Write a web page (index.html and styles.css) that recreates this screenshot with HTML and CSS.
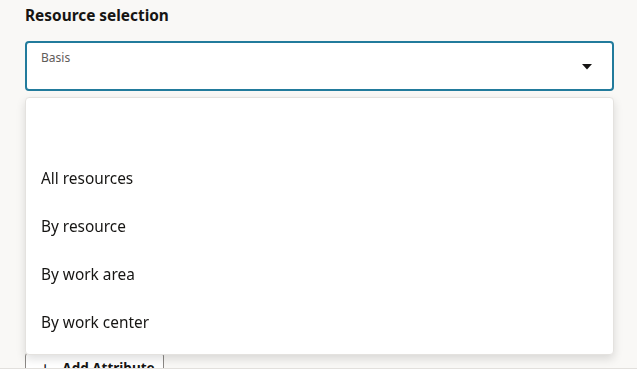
FILE: index.html
```html
<!DOCTYPE html>
<html lang="en">
<head>
    <meta charset="UTF-8">
    <meta name="viewport" content="width=device-width, initial-scale=1.0">
    <title>Resource selection</title>
    <link rel="stylesheet" href="styles.css">
</head>
<body>
    <div class="page">
        <h2 class="section-title">Resource selection</h2>

        <div class="select-field">
            <div class="select-inner">
                <span class="select-label">Basis</span>
                <span class="select-value"></span>
            </div>
            <svg class="select-arrow" width="10" height="6" viewBox="0 0 10 6">
                <path d="M0 0 H10 L5 5.5 Z" fill="#161513"/>
            </svg>
        </div>

        <!-- dropdown list, open over the rest of the form -->
        <ul class="dropdown">
            <li class="dropdown-item empty"></li>
            <li class="dropdown-item">All resources</li>
            <li class="dropdown-item">By resource</li>
            <li class="dropdown-item">By work area</li>
            <li class="dropdown-item">By work center</li>
        </ul>

        <div class="form-rest">
            <button class="btn-outline" type="button">
                <span class="btn-icon">+</span>
                <span>Add Attribute</span>
            </button>
        </div>
    </div>
    <div class="page-edge"></div>
</body>
</html>
```

FILE: styles.css
```css
html, body {
    height: 100%;
}

body {
    margin: 0;
    overflow: hidden;
    font-family: "Noto Sans", "Open Sans", Arial, sans-serif;
    color: #161513;
    background-color: #f9f8f6;
}

.page {
    position: relative;
    padding: 6px 23px 0 25px;
}

.section-title {
    margin: 0 0 15px 0;
    font-size: 15.4px;
    line-height: 20px;
    font-weight: 700;
}

.select-field {
    display: flex;
    align-items: center;
    height: 50px;
    box-sizing: border-box;
    border: 2px solid #227b9c;
    border-radius: 4px;
    background-color: #fff;
    padding: 0 20px 0 14px;
}

.select-inner {
    flex: 1;
    display: flex;
    flex-direction: column;
    align-self: flex-start;
    padding-top: 7px;
}

.select-label {
    font-size: 12px;
    line-height: 16px;
    color: #5f5c59;
}

.select-arrow {
    display: block;
    margin-top: 2px;
}

.dropdown {
    position: absolute;
    top: 97px;
    left: 25px;
    right: 23px;
    margin: 0;
    padding: 8px 0;
    list-style: none;
    background-color: #fff;
    border: 1px solid #e4e2df;
    border-radius: 4px;
    box-shadow: 0 4px 10px rgba(0, 0, 0, 0.13);
    z-index: 10;
}

.dropdown-item {
    height: 48px;
    display: flex;
    align-items: center;
    padding: 0 15px;
    font-size: 15.4px;
}

.form-rest {
    padding-top: 261px;
}

.btn-outline {
    display: flex;
    align-items: center;
    gap: 12px;
    width: 139px;
    height: 32px;
    padding: 0 14px;
    border: 1px solid #8b8885;
    border-radius: 4px;
    background-color: #fff;
    font-family: inherit;
    font-size: 13.5px;
    font-weight: 700;
    white-space: nowrap;
    color: #161513;
}

.btn-icon {
    font-size: 18px;
    font-weight: 400;
}

.page-edge {
    position: fixed;
    left: 0;
    right: 0;
    bottom: 0;
    height: 1px;
    background-color: #e2e0dd;
}
```
